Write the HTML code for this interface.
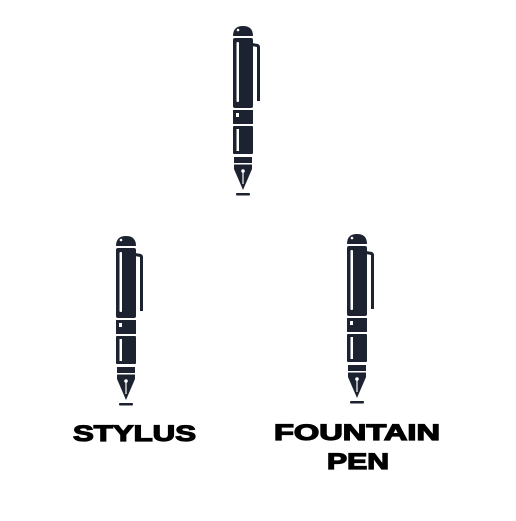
<!DOCTYPE html>
<html><head><style>html,body{margin:0;padding:0;background:#fff;}</style></head>
<body>
<svg width="516" height="516" viewBox="0 0 516 516" xmlns="http://www.w3.org/2000/svg">
<defs>
<g id="pen" fill="#1c2230">
  <path d="M0,10 Q0,0 10,0 Q20,0 20,10 Z"/>
  <circle cx="5" cy="4" r="1.3" fill="#fff"/>
  <rect x="0" y="12" width="20" height="70" rx="2"/>
  <rect x="3.5" y="16" width="2.5" height="60" rx="1" fill="#fff"/>
  <path d="M19,17 L25,18 Q27,19 27,21 L27,75 L24,75 L24,21 L19,20 Z"/>
  <rect x="0" y="84" width="20" height="14"/>
  <rect x="3" y="87" width="3" height="4" fill="#fff"/>
  <rect x="0" y="100" width="20" height="28" rx="1"/>
  <rect x="3.5" y="103" width="2.5" height="22" fill="#fff"/>
  <rect x="1" y="131" width="18" height="6"/>
  <path d="M1,138.5 L19,138.5 L19,143 L10,164 L1,143 Z"/>
  <circle cx="10" cy="145" r="1.8" fill="#fff"/>
  <rect x="9.4" y="146" width="1.2" height="12" fill="#fff"/>
  <rect x="3" y="167" width="14" height="2.5" rx="1"/>
</g>
</defs>
<use href="#pen" x="233" y="26"/>
<use href="#pen" x="116" y="236"/>
<use href="#pen" x="347" y="234"/>
<g font-family="Liberation Sans, sans-serif" font-weight="bold" font-size="22" fill="#000" stroke="#000" stroke-width="1.2">
  <text x="73" y="441" textLength="123" lengthAdjust="spacingAndGlyphs">STYLUS</text>
  <text x="274" y="440" textLength="166" lengthAdjust="spacingAndGlyphs">FOUNTAIN</text>
  <text x="327" y="469" textLength="62" lengthAdjust="spacingAndGlyphs">PEN</text>
</g>
</svg>
</body></html>
